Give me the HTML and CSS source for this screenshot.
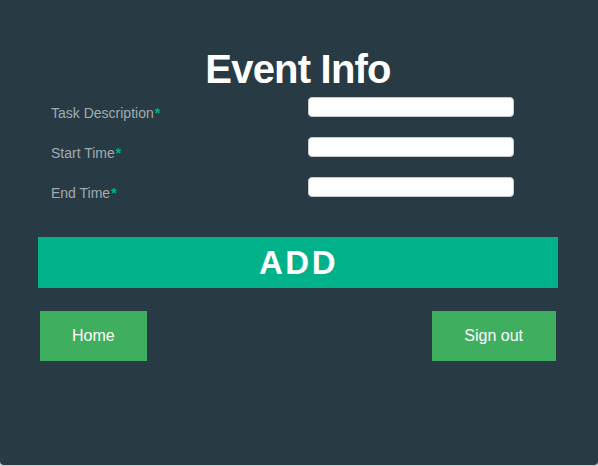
FILE: index.html
```html
<!DOCTYPE html>
<html lang="en">
<head>
<meta charset="utf-8">
<title>Event Info</title>
<link rel="stylesheet" href="styles.css">
</head>
<body>
<main class="page">
  <h1 class="title">Event Info</h1>
  <form class="form">
    <div class="row">
      <label class="label" for="desc">Task Description<span class="req">*</span></label>
      <input class="field" id="desc" type="text">
    </div>
    <div class="row">
      <label class="label" for="start">Start Time<span class="req">*</span></label>
      <input class="field" id="start" type="text">
    </div>
    <div class="row">
      <label class="label" for="end">End Time<span class="req">*</span></label>
      <input class="field" id="end" type="text">
    </div>
    <button class="add" type="button">ADD</button>
    <div class="nav">
      <button class="navbtn" type="button">Home</button>
      <button class="navbtn navbtn-wide" type="button">Sign out</button>
    </div>
  </form>
</main>
</body>
</html>
```
FILE: styles.css
```css
html {
  background: #c9d1d5;
}
body {
  margin: 0;
  font-family: "Liberation Sans", Arial, sans-serif;
}
.page {
  box-sizing: border-box;
  height: 465px;
  background: #283a43;
  border-radius: 0 0 4px 4px;
  padding: 46px 40px 0 38px;
}
.title {
  margin: 0;
  height: 46px;
  line-height: 46px;
  font-size: 40px;
  font-weight: 700;
  letter-spacing: -0.8px;
  color: #ffffff;
  text-align: center;
}
.form {
  margin: 5px 0 0;
  display: flex;
  flex-direction: column;
}
.row {
  height: 40px;
  display: grid;
  grid-template-columns: 257px 206px;
  align-items: start;
  padding-left: 13px;
}
.label {
  padding-top: 6px;
  font-size: 14px;
  line-height: 20px;
  color: #a2abb0;
}
.req {
  color: #00b189;
  margin-left: 1px;
  font-weight: 700;
}
.field {
  box-sizing: border-box;
  width: 206px;
  height: 20px;
  margin: 0;
  border: 1px solid #c9ccce;
  border-radius: 4px;
  background: #ffffff;
  padding: 0 6px;
}
.add {
  margin-top: 20px;
  height: 51px;
  border: 0;
  background: #00b189;
  color: #ffffff;
  font-family: "Liberation Sans", Arial, sans-serif;
  font-size: 33px;
  font-weight: 700;
  letter-spacing: 2.5px;
  padding: 0 0 0 1px;
}
.nav {
  margin-top: 23px;
  padding: 0 2px;
  display: flex;
  justify-content: space-between;
}
.navbtn {
  height: 50px;
  border: 0;
  background: #40ae5f;
  color: #ffffff;
  font-family: "Liberation Sans", Arial, sans-serif;
  font-size: 16px;
  padding: 0 32px;
}
.navbtn-wide {
  padding: 0 33px 0 32px;
}
```
